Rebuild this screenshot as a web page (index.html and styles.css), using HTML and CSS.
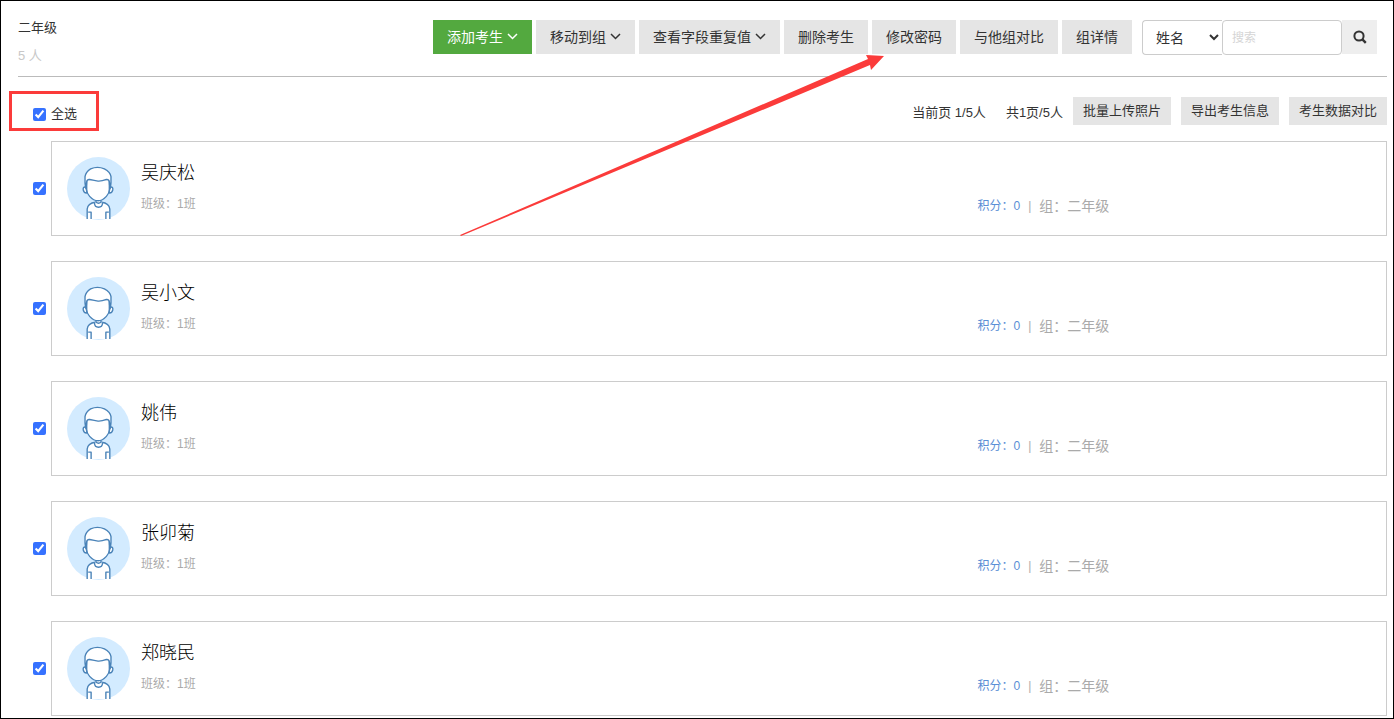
FILE: index.html
```html
<!DOCTYPE html>
<html lang="zh-CN">
<head>
<meta charset="utf-8">
<title>二年级</title>
<link rel="stylesheet" href="styles.css">
</head>
<body>
<svg class="defs" width="0" height="0" aria-hidden="true">
  <symbol id="avatar" viewBox="0 0 64 64">
    <circle cx="32" cy="32" r="32" fill="#d3ebff"/>
    <g fill="#fff" stroke="#4a83b8" stroke-width="1.4" stroke-linejoin="round">
      <path stroke="none" d="M20.500 63V53Q21 47 29 46H35Q43 47 43.500 53V63Z"/>
      <path fill="none" d="M20.500 63V53Q21 47 29 46M43.500 63V53Q43 47 35 46M24.500 63V56H21.500M39.500 63V56H42.500"/>
      <path d="M28 46V47Q28 51 32 51T36 47V46"/>
      <path d="M29.500 43V46Q32 48 34.500 46V43"/>
      <path d="M19 30.500Q16 30 16.500 33.500Q17.500 37 20.500 36.500ZM44 30.500Q47 30 46.500 33.500Q45.500 37 42.500 36.500Z"/>
      <path d="M20 23H43V33Q43 37 40 40Q36 44.500 31.500 44.500T23 40Q20 37 20 33Z"/>
      <path d="M19 31.500Q18 26 18.300 20Q19 15 24 12Q31 9 38 12Q44 15 44.700 20Q45 26 44 31.500Q43 28 43 25Q42.500 22.500 40 22.800Q35 24.800 31.500 24.500T23 22.800Q20.500 22.500 20 25Q20 28 19 31.500Z"/>
    </g>
  </symbol>
  <symbol id="chevron" viewBox="0 0 11 8"><path d="M1 1 5.500 5.500 10 1" fill="none" stroke="currentColor" stroke-width="1.5"/></symbol>
</svg>
<main class="page">
  <header class="header">
    <div class="group">
      <h1 class="group-name">二年级</h1>
      <p class="group-count">5 人</p>
    </div>
    <div class="toolbar">
      <button class="btn btn-primary" type="button">添加考生<svg class="caret"><use href="#chevron"/></svg></button>
      <button class="btn" type="button">移动到组<svg class="caret"><use href="#chevron"/></svg></button>
      <button class="btn" type="button">查看字段重复值<svg class="caret"><use href="#chevron"/></svg></button>
      <button class="btn" type="button">删除考生</button>
      <button class="btn" type="button">修改密码</button>
      <button class="btn" type="button">与他组对比</button>
      <button class="btn" type="button">组详情</button>
      <form class="search">
        <select class="search-field" aria-label="搜索字段"><option>姓名</option></select>
        <input class="search-text" type="text" placeholder="搜索" aria-label="搜索">
        <button class="search-btn" type="button" aria-label="搜索"><svg class="search-icon" viewBox="0 0 14 14"><circle cx="6" cy="6" r="4.6" fill="none" stroke="currentColor" stroke-width="2"/><path d="M9.4 9.4 12.8 12.8" stroke="currentColor" stroke-width="2.4"/></svg></button>
      </form>
    </div>
  </header>

  <div class="subbar">
    <label class="select-all"><input class="check" type="checkbox" checked>全选</label>
    <div class="paging">
      <span class="page-info">当前页 1/5人</span>
      <span class="page-info">共1页/5人</span>
      <button class="btn-small" type="button">批量上传照片</button>
      <button class="btn-small" type="button">导出考生信息</button>
      <button class="btn-small" type="button">考生数据对比</button>
    </div>
  </div>

  <ul class="list">
    <li class="row"><input class="check" type="checkbox" aria-label="吴庆松" checked>
      <article class="card"><div class="person"><svg class="avatar"><use href="#avatar"/></svg><div><h2 class="name">吴庆松</h2><p class="class">班级：1班</p></div></div>
      <p class="meta"><span class="score">积分：0</span><span class="bar">|</span><span class="team">组：二年级</span></p></article></li>
    <li class="row"><input class="check" type="checkbox" aria-label="吴小文" checked>
      <article class="card"><div class="person"><svg class="avatar"><use href="#avatar"/></svg><div><h2 class="name">吴小文</h2><p class="class">班级：1班</p></div></div>
      <p class="meta"><span class="score">积分：0</span><span class="bar">|</span><span class="team">组：二年级</span></p></article></li>
    <li class="row"><input class="check" type="checkbox" aria-label="姚伟" checked>
      <article class="card"><div class="person"><svg class="avatar"><use href="#avatar"/></svg><div><h2 class="name">姚伟</h2><p class="class">班级：1班</p></div></div>
      <p class="meta"><span class="score">积分：0</span><span class="bar">|</span><span class="team">组：二年级</span></p></article></li>
    <li class="row"><input class="check" type="checkbox" aria-label="张卯菊" checked>
      <article class="card"><div class="person"><svg class="avatar"><use href="#avatar"/></svg><div><h2 class="name">张卯菊</h2><p class="class">班级：1班</p></div></div>
      <p class="meta"><span class="score">积分：0</span><span class="bar">|</span><span class="team">组：二年级</span></p></article></li>
    <li class="row"><input class="check" type="checkbox" aria-label="郑晓民" checked>
      <article class="card"><div class="person"><svg class="avatar"><use href="#avatar"/></svg><div><h2 class="name">郑晓民</h2><p class="class">班级：1班</p></div></div>
      <p class="meta"><span class="score">积分：0</span><span class="bar">|</span><span class="team">组：二年级</span></p></article></li>
  </ul>
  <svg class="arrow" viewBox="0 0 424 181" aria-hidden="true"><path fill="#fb3b3a" d="M0 180 408 4 406 0 424 1 411 15 410 10 1 181Z"/></svg>
</main>
</body>
</html>
```
FILE: styles.css
```css
* {
  box-sizing: border-box;
}

body {
  margin: 0;
  background: #fff;
  color: #333;
  font: 13px/20px "Liberation Sans", "Noto Sans CJK SC", sans-serif;
}

h1, h2, p, ul {
  margin: 0;
  padding: 0;
  font-weight: inherit;
}

button, input, select {
  margin: 0;
  font: inherit;
  color: inherit;
}

.defs {
  position: absolute;
}

.page {
  position: relative;
  border: 1px solid #000;
  padding: 0 6px 2px 17px;
}

.header {
  display: flex;
  justify-content: space-between;
  align-items: flex-start;
  padding: 17px 0 10px;
  border-bottom: 1px solid #bbb;
}

.group-name {
  font-size: 13px;
  line-height: 20px;
}

.group-count {
  margin-top: 8px;
  color: #c8c8c8;
}

.toolbar {
  display: flex;
  gap: 4px;
  padding: 2px 10px 0 0;
}

.btn {
  display: flex;
  align-items: center;
  gap: 4px;
  height: 34px;
  padding: 0 14px;
  border: 0;
  background: #e5e5e5;
  font-size: 14px;
  white-space: nowrap;
}

.btn-primary {
  background: #53a93f;
  color: #fff;
}

.caret {
  width: 11px;
  height: 8px;
}

.search {
  display: flex;
  margin-left: 6px;
}

.search-field {
  width: 80px;
  height: 35px;
  padding: 0 0 0 9px;
  border: 1px solid #ccc;
  border-right: 0;
  border-radius: 4px 0 0 4px;
  background: #fff;
  font-size: 14px;
}

.search-text {
  width: 120px;
  height: 35px;
  padding: 0 9px;
  border: 1px solid #ccc;
  border-radius: 4px;
  font-size: 12px;
}

.search-text::placeholder {
  color: #d5d5d5;
}

.search-btn {
  display: flex;
  align-items: center;
  justify-content: center;
  width: 35px;
  height: 34px;
  padding: 0;
  border: 0;
  background: #eee;
}

.search-icon {
  width: 14px;
  height: 14px;
}

.check {
  flex: none;
  width: 13px;
  height: 13px;
  accent-color: #3672ff;
}

.subbar {
  display: flex;
  justify-content: space-between;
  align-items: flex-start;
  padding: 14px 0 10px;
}

.select-all {
  display: flex;
  align-items: center;
  gap: 5px;
  width: 90px;
  height: 40px;
  margin-left: -9px;
  padding: 6px 0 0 21px;
  border: 3px solid #fb3b3a;
}

.paging {
  display: flex;
  gap: 10px;
  padding-top: 6px;
}

.page-info {
  padding: 6px 0 0 10px;
}

.btn-small {
  height: 28px;
  padding: 0 10px;
  border: 0;
  background: #e5e5e5;
}

.list {
  list-style: none;
  padding-left: 15px;
}

.row {
  display: flex;
  align-items: center;
  gap: 5px;
}

.row + .row {
  margin-top: 25px;
}

.card {
  flex: 1;
  display: grid;
  grid-template-columns: 9fr 4fr;
  height: 95px;
  border: 1px solid #ccc;
}

.person {
  display: flex;
  gap: 11px;
  padding: 15px;
}

.avatar {
  width: 63px;
  height: 63px;
}

.name {
  color: #000;
  font-size: 18px;
  font-weight: 300;
  line-height: 32px;
}

.class {
  margin-top: 5px;
  color: #aaa;
  font-size: 12px;
}

.meta {
  display: flex;
  align-items: center;
  gap: 8px;
  height: 20px;
  margin-top: 54px;
  padding-left: 2px;
  color: #aaa;
  font-size: 12px;
}

.score {
  color: #5c8fd6;
}

.team {
  font-size: 14px;
}

.arrow {
  position: absolute;
  left: 459px;
  top: 54px;
  width: 424px;
  height: 181px;
}
```
